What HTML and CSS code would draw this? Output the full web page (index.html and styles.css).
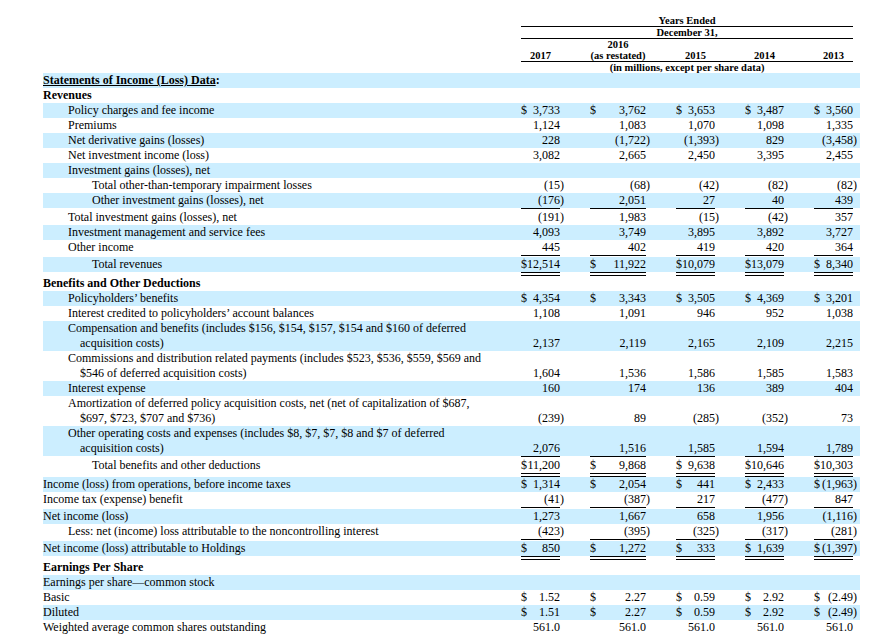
FILE: index.html
```html
<!DOCTYPE html>
<html lang="en">
<head>
<meta charset="utf-8">
<title>Selected Financial Data</title>
<link rel="stylesheet" href="styles.css">
</head>
<body>
<div class="wrap">
<table class="fin">
<colgroup>
<col class="c-lab"><col class="c-v"><col class="c-g"><col class="c-v16"><col class="c-g"><col class="c-v"><col class="c-g"><col class="c-v"><col class="c-g"><col class="c-v"><col class="c-e">
</colgroup>
<thead>
<tr class="hd"><td></td><td colspan="9" class="bb">Years Ended</td><td></td></tr>
<tr class="hd"><td></td><td colspan="9" class="bb">December 31,</td><td></td></tr>
<tr class="hd"><td></td><td class="bb">2017</td><td class="bb"></td><td class="bb">2016<br>(as restated)</td><td class="bb"></td><td class="bb">2015</td><td class="bb"></td><td class="bb">2014</td><td class="bb"></td><td class="bb">2013</td><td></td></tr>
<tr class="hd"><td></td><td colspan="9">(in millions, except per share data)</td><td></td></tr>
</thead>
<tbody>
<tr class="sh"><td colspan="11" class="b"><span class="ul">Statements of Income (Loss) Data</span>:</td></tr>
<tr><td colspan="11" class="b">Revenues</td></tr>
<tr class="sh"><td class="i1">Policy charges and fee income</td><td class="v"><span class="d">$</span>3,733</td><td></td><td class="v"><span class="d">$</span>3,762</td><td></td><td class="v"><span class="d">$</span>3,653</td><td></td><td class="v"><span class="d">$</span>3,487</td><td></td><td class="v"><span class="d">$</span>3,560</td><td></td></tr>
<tr><td class="i1">Premiums</td><td class="v">1,124</td><td></td><td class="v">1,083</td><td></td><td class="v">1,070</td><td></td><td class="v">1,098</td><td></td><td class="v">1,335</td><td></td></tr>
<tr class="sh"><td class="i1">Net derivative gains (losses)</td><td class="v">228</td><td></td><td class="v">(1,722</td><td>)</td><td class="v">(1,393</td><td>)</td><td class="v">829</td><td></td><td class="v">(3,458</td><td>)</td></tr>
<tr><td class="i1">Net investment income (loss)</td><td class="v">3,082</td><td></td><td class="v">2,665</td><td></td><td class="v">2,450</td><td></td><td class="v">3,395</td><td></td><td class="v">2,455</td><td></td></tr>
<tr class="sh"><td colspan="11" class="i1">Investment gains (losses), net</td></tr>
<tr><td class="i2">Total other-than-temporary impairment losses</td><td class="v">(15</td><td>)</td><td class="v">(68</td><td>)</td><td class="v">(42</td><td>)</td><td class="v">(82</td><td>)</td><td class="v">(82</td><td>)</td></tr>
<tr class="sh"><td class="i2">Other investment gains (losses), net</td><td class="v">(176</td><td>)</td><td class="v">2,051</td><td></td><td class="v">27</td><td></td><td class="v">40</td><td></td><td class="v">439</td><td></td></tr>
<tr class="r1"><td></td><td class="u1"></td><td></td><td class="u1"></td><td></td><td class="u1"></td><td></td><td class="u1"></td><td></td><td class="u1"></td><td></td></tr>
<tr><td class="i1">Total investment gains (losses), net</td><td class="v">(191</td><td>)</td><td class="v">1,983</td><td></td><td class="v">(15</td><td>)</td><td class="v">(42</td><td>)</td><td class="v">357</td><td></td></tr>
<tr class="sh"><td class="i1">Investment management and service fees</td><td class="v">4,093</td><td></td><td class="v">3,749</td><td></td><td class="v">3,895</td><td></td><td class="v">3,892</td><td></td><td class="v">3,727</td><td></td></tr>
<tr><td class="i1">Other income</td><td class="v">445</td><td></td><td class="v">402</td><td></td><td class="v">419</td><td></td><td class="v">420</td><td></td><td class="v">364</td><td></td></tr>
<tr class="r1"><td></td><td class="u1"></td><td></td><td class="u1"></td><td></td><td class="u1"></td><td></td><td class="u1"></td><td></td><td class="u1"></td><td></td></tr>
<tr class="sh"><td class="i2">Total revenues</td><td class="v"><span class="d">$</span>12,514</td><td></td><td class="v"><span class="d">$</span>11,922</td><td></td><td class="v"><span class="d">$</span>10,079</td><td></td><td class="v"><span class="d">$</span>13,079</td><td></td><td class="v"><span class="d">$</span>8,340</td><td></td></tr>
<tr class="r2"><td></td><td class="u2"></td><td></td><td class="u2"></td><td></td><td class="u2"></td><td></td><td class="u2"></td><td></td><td class="u2"></td><td></td></tr>
<tr><td colspan="11" class="b">Benefits and Other Deductions</td></tr>
<tr class="sh"><td class="i1">Policyholders’ benefits</td><td class="v"><span class="d">$</span>4,354</td><td></td><td class="v"><span class="d">$</span>3,343</td><td></td><td class="v"><span class="d">$</span>3,505</td><td></td><td class="v"><span class="d">$</span>4,369</td><td></td><td class="v"><span class="d">$</span>3,201</td><td></td></tr>
<tr><td class="i1">Interest credited to policyholders’ account balances</td><td class="v">1,108</td><td></td><td class="v">1,091</td><td></td><td class="v">946</td><td></td><td class="v">952</td><td></td><td class="v">1,038</td><td></td></tr>
<tr class="sh"><td class="i1">Compensation and benefits (includes $156, $154, $157, $154 and $160 of deferred<br>acquisition costs)</td><td class="v">2,137</td><td></td><td class="v">2,119</td><td></td><td class="v">2,165</td><td></td><td class="v">2,109</td><td></td><td class="v">2,215</td><td></td></tr>
<tr><td class="i1">Commissions and distribution related payments (includes $523, $536, $559, $569 and<br>$546 of deferred acquisition costs)</td><td class="v">1,604</td><td></td><td class="v">1,536</td><td></td><td class="v">1,586</td><td></td><td class="v">1,585</td><td></td><td class="v">1,583</td><td></td></tr>
<tr class="sh"><td class="i1">Interest expense</td><td class="v">160</td><td></td><td class="v">174</td><td></td><td class="v">136</td><td></td><td class="v">389</td><td></td><td class="v">404</td><td></td></tr>
<tr><td class="i1">Amortization of deferred policy acquisition costs, net (net of capitalization of $687,<br>$697, $723, $707 and $736)</td><td class="v">(239</td><td>)</td><td class="v">89</td><td></td><td class="v">(285</td><td>)</td><td class="v">(352</td><td>)</td><td class="v">73</td><td></td></tr>
<tr class="sh"><td class="i1">Other operating costs and expenses (includes $8, $7, $7, $8 and $7 of deferred<br>acquisition costs)</td><td class="v">2,076</td><td></td><td class="v">1,516</td><td></td><td class="v">1,585</td><td></td><td class="v">1,594</td><td></td><td class="v">1,789</td><td></td></tr>
<tr class="r1"><td></td><td class="u1"></td><td></td><td class="u1"></td><td></td><td class="u1"></td><td></td><td class="u1"></td><td></td><td class="u1"></td><td></td></tr>
<tr><td class="i2">Total benefits and other deductions</td><td class="v"><span class="d">$</span>11,200</td><td></td><td class="v"><span class="d">$</span>9,868</td><td></td><td class="v"><span class="d">$</span>9,638</td><td></td><td class="v"><span class="d">$</span>10,646</td><td></td><td class="v"><span class="d">$</span>10,303</td><td></td></tr>
<tr class="r2"><td></td><td class="u2"></td><td></td><td class="u2"></td><td></td><td class="u2"></td><td></td><td class="u2"></td><td></td><td class="u2"></td><td></td></tr>
<tr class="sh"><td>Income (loss) from operations, before income taxes</td><td class="v"><span class="d">$</span>1,314</td><td></td><td class="v"><span class="d">$</span>2,054</td><td></td><td class="v"><span class="d">$</span>441</td><td></td><td class="v"><span class="d">$</span>2,433</td><td></td><td class="v"><span class="d">$</span>(1,963</td><td>)</td></tr>
<tr><td>Income tax (expense) benefit</td><td class="v">(41</td><td>)</td><td class="v">(387</td><td>)</td><td class="v">217</td><td></td><td class="v">(477</td><td>)</td><td class="v">847</td><td></td></tr>
<tr class="r1"><td></td><td class="u1"></td><td></td><td class="u1"></td><td></td><td class="u1"></td><td></td><td class="u1"></td><td></td><td class="u1"></td><td></td></tr>
<tr class="sh"><td>Net income (loss)</td><td class="v">1,273</td><td></td><td class="v">1,667</td><td></td><td class="v">658</td><td></td><td class="v">1,956</td><td></td><td class="v">(1,116</td><td>)</td></tr>
<tr><td class="i1">Less: net (income) loss attributable to the noncontrolling interest</td><td class="v">(423</td><td>)</td><td class="v">(395</td><td>)</td><td class="v">(325</td><td>)</td><td class="v">(317</td><td>)</td><td class="v">(281</td><td>)</td></tr>
<tr class="r1"><td></td><td class="u1"></td><td></td><td class="u1"></td><td></td><td class="u1"></td><td></td><td class="u1"></td><td></td><td class="u1"></td><td></td></tr>
<tr class="sh"><td>Net income (loss) attributable to Holdings</td><td class="v"><span class="d">$</span>850</td><td></td><td class="v"><span class="d">$</span>1,272</td><td></td><td class="v"><span class="d">$</span>333</td><td></td><td class="v"><span class="d">$</span>1,639</td><td></td><td class="v"><span class="d">$</span>(1,397</td><td>)</td></tr>
<tr class="r2"><td></td><td class="u2"></td><td></td><td class="u2"></td><td></td><td class="u2"></td><td></td><td class="u2"></td><td></td><td class="u2"></td><td></td></tr>
<tr><td colspan="11" class="b">Earnings Per Share</td></tr>
<tr class="sh"><td colspan="11">Earnings per share—common stock</td></tr>
<tr><td>Basic</td><td class="v"><span class="d">$</span>1.52</td><td></td><td class="v"><span class="d">$</span>2.27</td><td></td><td class="v"><span class="d">$</span>0.59</td><td></td><td class="v"><span class="d">$</span>2.92</td><td></td><td class="v"><span class="d">$</span>(2.49</td><td>)</td></tr>
<tr class="sh"><td>Diluted</td><td class="v"><span class="d">$</span>1.51</td><td></td><td class="v"><span class="d">$</span>2.27</td><td></td><td class="v"><span class="d">$</span>0.59</td><td></td><td class="v"><span class="d">$</span>2.92</td><td></td><td class="v"><span class="d">$</span>(2.49</td><td>)</td></tr>
<tr><td>Weighted average common shares outstanding</td><td class="v">561.0</td><td></td><td class="v">561.0</td><td></td><td class="v">561.0</td><td></td><td class="v">561.0</td><td></td><td class="v">561.0</td><td></td></tr>
</tbody>
</table>
</div>
</body>
</html>
```
FILE: styles.css
```css
* { box-sizing: border-box; }
body {
  margin: 0;
  background: #fff;
  color: #000;
  font-family: "Liberation Serif", "Times New Roman", serif;
}
.wrap { padding: 15px 0 0 43px; }
.fin {
  width: 817px;
  table-layout: fixed;
  border-collapse: separate;
  border-spacing: 0;
  font-size: 12px;
  line-height: 15px;
}
.c-lab { width: 478px; }
.c-v { width: 39px; }
.c-v16 { width: 56px; }
.c-g { width: 30px; }
.c-e { width: 7px; }
.fin td {
  padding: 0;
  vertical-align: bottom;
  white-space: nowrap;
  text-align: left;
}
.fin .hd td {
  font-size: 10.5px;
  line-height: 11px;
  font-weight: bold;
  text-align: center;
}
.fin .hd td.bb { border-bottom: 1px solid #000; }
.fin .sh td { background: #cceeff; }
.fin td.b { font-weight: bold; }
.ul { text-decoration: underline; }
.fin td.i1 { padding-left: 37px; text-indent: -12px; }
.fin td.i2 { padding-left: 49px; }
.fin td.v { text-align: right; }
.d { float: left; }
.fin .r1 { height: 2px; }
.fin .r2 { height: 4px; }
.fin .r1 td, .fin .r2 td { font-size: 0; line-height: 0; }
.fin td.u1 { background: linear-gradient(#000, #000) top / 100% 1px no-repeat; }
.fin td.u2 { background: linear-gradient(to bottom, #000 0 1px, transparent 1px 3px, #000 3px 4px); }
```
